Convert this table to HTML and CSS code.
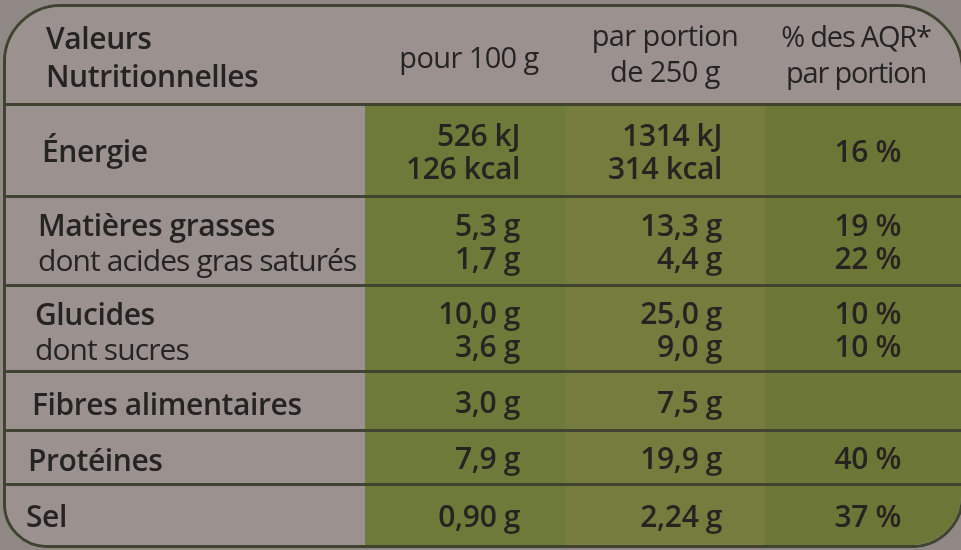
FILE: index.html
```html
<!DOCTYPE html>
<html lang="fr">
<head>
<meta charset="utf-8">
<title>Valeurs Nutritionnelles</title>
<link rel="stylesheet" href="styles.css">
</head>
<body>
<div class="label">
  <div class="row head">
    <div class="cell name"><div>Valeurs<br>Nutritionnelles</div></div>
    <div class="cell hc h1"><div>pour 100 g</div></div>
    <div class="cell hc h2"><div>par portion<br>de 250 g</div></div>
    <div class="cell hc h3"><div>% des AQR*<br>par portion</div></div>
  </div>
  <div class="row r-energy">
    <div class="cell name"><div>Énergie</div></div>
    <div class="cell v c1"><div>526 kJ<br>126 kcal</div></div>
    <div class="cell v c2"><div>1314 kJ<br>314 kcal</div></div>
    <div class="cell v c3"><div>16 %</div></div>
  </div>
  <div class="row r-fat">
    <div class="cell name"><div>Matières grasses<br><span class="sub">dont acides gras saturés</span></div></div>
    <div class="cell v c1"><div>5,3 g<br>1,7 g</div></div>
    <div class="cell v c2"><div>13,3 g<br>4,4 g</div></div>
    <div class="cell v c3"><div>19 %<br>22 %</div></div>
  </div>
  <div class="row r-carb">
    <div class="cell name"><div>Glucides<br><span class="sub">dont sucres</span></div></div>
    <div class="cell v c1"><div>10,0 g<br>3,6 g</div></div>
    <div class="cell v c2"><div>25,0 g<br>9,0 g</div></div>
    <div class="cell v c3"><div>10 %<br>10 %</div></div>
  </div>
  <div class="row r-fib">
    <div class="cell name"><div>Fibres alimentaires</div></div>
    <div class="cell v c1"><div>3,0 g</div></div>
    <div class="cell v c2"><div>7,5 g</div></div>
    <div class="cell v c3"></div>
  </div>
  <div class="row r-prot">
    <div class="cell name"><div>Protéines</div></div>
    <div class="cell v c1"><div>7,9 g</div></div>
    <div class="cell v c2"><div>19,9 g</div></div>
    <div class="cell v c3"><div>40 %</div></div>
  </div>
  <div class="row r-salt">
    <div class="cell name"><div>Sel</div></div>
    <div class="cell v c1"><div>0,90 g</div></div>
    <div class="cell v c2"><div>2,24 g</div></div>
    <div class="cell v c3"><div>37 %</div></div>
  </div>
</div>
</body>
</html>
```

FILE: styles.css
```css
html, body {
  margin: 0;
  padding: 0;
  width: 961px;
  height: 550px;
  overflow: hidden;
  background: #8f8885;
}

body {
  font-family: "Open Sans", "Noto Sans", sans-serif;
  color: #262420;
}

.label {
  box-sizing: border-box;
  margin: 4px 0 0 3px;
  width: 961px;
  height: 544px;
  border: 3px solid #3f4330;
  border-radius: 58px 68px 52px 44px;
  overflow: hidden;
  background: #9a918f;
  display: flex;
  flex-direction: column;
  filter: blur(0.4px);
}

.row {
  display: grid;
  grid-template-columns: 359px 200px 200px 1fr;
  border-top: 3px solid #3f4330;
}

.row.head { border-top: none; height: 96px; }
.r-energy { height: 89px; }
.r-fat { height: 86px; }
.r-carb { height: 83px; }
.r-fib { height: 56px; }
.r-prot { height: 51px; }
.r-salt { flex: 1; }

.cell {
  display: flex;
  align-items: center;
  font-size: 30px;
  line-height: 33px;
  font-weight: 600;
  letter-spacing: -0.4px;
  white-space: nowrap;
}

.name {
  padding-left: 30px;
  background: #9b9290;
}

.r-energy .name { padding-left: 36px; }
.r-fat .name { padding-left: 32px; line-height: 35px; padding-top: 2px; }
.r-carb .name { padding-left: 29px; line-height: 35px; padding-top: 4px; }
.r-fib .name { padding-left: 26px; padding-top: 4px; }
.r-prot .name { padding-left: 22px; padding-top: 4px; }
.r-salt .name { padding-left: 20px; }

.name .sub { letter-spacing: -0.9px; font-weight: 500; }

.head .name {
  padding-left: 40px;
  line-height: 38px;
  padding-top: 4px;
}

.hc {
  justify-content: center;
  text-align: center;
  font-size: 29px;
  line-height: 36px;
  font-weight: 500;
  letter-spacing: -0.6px;
  background: #9b9290;
}

.h1 { padding-top: 4px; padding-left: 8px; }
.h2 { padding-bottom: 4px; }
.h3 { padding-right: 14px; padding-bottom: 2px; letter-spacing: -1.2px; }

.v {
  justify-content: flex-end;
  text-align: right;
}

.c1 { padding-right: 45px; background: #6e7a39; }
.c2 { padding-right: 43px; background: #767b3e; }
.c3 { padding-right: 60px; background: #6c7737; }
```
